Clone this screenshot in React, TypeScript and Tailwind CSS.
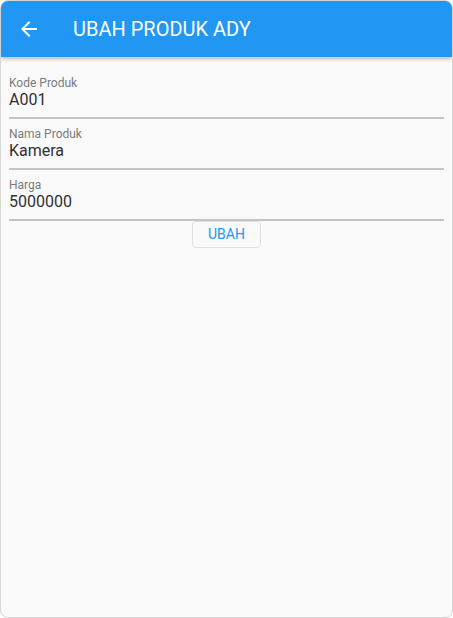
import React from "react";

const fields = [
  { label: "Kode Produk", value: "A001" },
  { label: "Nama Produk", value: "Kamera" },
  { label: "Harga", value: "5000000" },
];

export default function App() {
  return (
    <div className="h-[618px] w-[453px] overflow-hidden rounded-[8px] border border-[#d6d6d6] bg-[#fafafa] font-['Roboto',sans-serif]">
      <header className="relative z-10 flex h-[56px] items-center bg-[#2196f3] shadow-[0_2px_4px_rgba(0,0,0,0.25)]">
        <div className="flex w-[56px] justify-center">
          <svg width="24" height="24" viewBox="0 0 24 24" fill="#ffffff">
            <path d="M20 11H7.83l5.59-5.59L12 4l-8 8 8 8 1.41-1.41L7.83 13H20v-2z" />
          </svg>
        </div>
        <h1 className="ml-[16px] text-[20px] font-normal leading-none text-white">
          UBAH PRODUK ADY
        </h1>
      </header>

      <main className="px-[8px] pt-[11px]">
        {fields.map((f) => (
          <div key={f.label} className="pt-[8px]">
            <p className="text-[12px] leading-[14px] text-[#7a7a7a]">{f.label}</p>
            <p className="text-[16px] leading-[20px] text-[#303030]">{f.value}</p>
            <div className="mt-[7px] h-[2px] bg-[#c4c4c4]" />
          </div>
        ))}
        <div className="flex justify-center">
          <button className="h-[27px] w-[69px] rounded-[4px] border border-[#e0e0e0] text-[14px] text-[#2196f3]">
            UBAH
          </button>
        </div>
      </main>
    </div>
  );
}
